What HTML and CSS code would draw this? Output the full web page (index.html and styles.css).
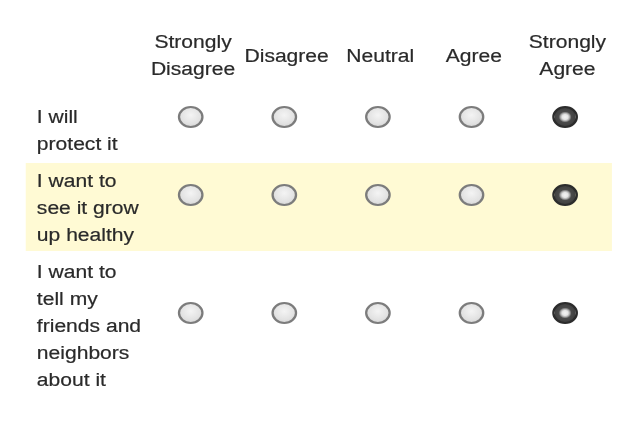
FILE: index.html
```html
<!DOCTYPE html>
<html lang="en">
<head>
<meta charset="utf-8">
<title>Survey</title>
<link rel="stylesheet" href="styles.css">
</head>
<body>
<div class="survey">
  <div class="grid head">
    <div class="label"></div>
    <div class="hcell">Strongly Disagree</div>
    <div class="hcell">Disagree</div>
    <div class="hcell">Neutral</div>
    <div class="hcell">Agree</div>
    <div class="hcell">Strongly Agree</div>
  </div>
  <div class="grid row">
    <div class="label">I will protect it</div>
    <div class="cell"><span class="radio"></span></div>
    <div class="cell"><span class="radio"></span></div>
    <div class="cell"><span class="radio"></span></div>
    <div class="cell"><span class="radio"></span></div>
    <div class="cell"><span class="radio on"></span></div>
  </div>
  <div class="grid row alt">
    <div class="label">I want to see it grow up healthy</div>
    <div class="cell"><span class="radio"></span></div>
    <div class="cell"><span class="radio"></span></div>
    <div class="cell"><span class="radio"></span></div>
    <div class="cell"><span class="radio"></span></div>
    <div class="cell"><span class="radio on"></span></div>
  </div>
  <div class="grid row">
    <div class="label">I want to tell my friends and neighbors about it</div>
    <div class="cell"><span class="radio"></span></div>
    <div class="cell"><span class="radio"></span></div>
    <div class="cell"><span class="radio"></span></div>
    <div class="cell"><span class="radio"></span></div>
    <div class="cell"><span class="radio on"></span></div>
  </div>
</div>
</body>
</html>
```

FILE: styles.css
```css
html, body {
  margin: 0;
  padding: 0;
  background: #ffffff;
}

body {
  width: 640px;
  height: 427px;
  overflow: hidden;
}

.survey {
  width: 547px;
  box-sizing: border-box;
  padding: 29px 0 0 21.5px;
  transform: scaleX(1.17);
  transform-origin: 0 0;
  font-family: "Liberation Sans", Arial, sans-serif;
  font-size: 18px;
  line-height: 27px;
  color: #2a2a2a;
  -webkit-text-stroke: 0.2px #2a2a2a;
  filter: blur(0.4px);
}

.grid {
  display: grid;
  grid-template-columns: 101px repeat(5, 80px);
  width: 501px;
}

.head {
  align-items: center;
  margin-bottom: 16px;
}

.hcell {
  text-align: center;
  padding-left: 5px;
}

.row {
  padding: 5px 0 2px;
  margin-bottom: 3px;
}

.alt {
  background: #fffad4;
}

.label {
  padding-left: 10px;
}

.cell {
  display: flex;
  align-items: center;
  justify-content: center;
  padding-bottom: 28px;
}

.radio {
  display: block;
  width: 22px;
  height: 22px;
  box-sizing: border-box;
  border-radius: 50%;
  border: 2px solid #7c7c7c;
  background: radial-gradient(circle at 50% 40%, #f4f4f4 0%, #e2e2e2 60%, #cdcdcd 100%);
}

.radio.on {
  border-color: #2c2c2c;
  background: radial-gradient(circle at 50% 50%, #f4f4f4 0, #e4e4e4 2.5px, #b0b0b0 3.8px, #4a4a4a 5.5px, #363636 100%);
}
```
